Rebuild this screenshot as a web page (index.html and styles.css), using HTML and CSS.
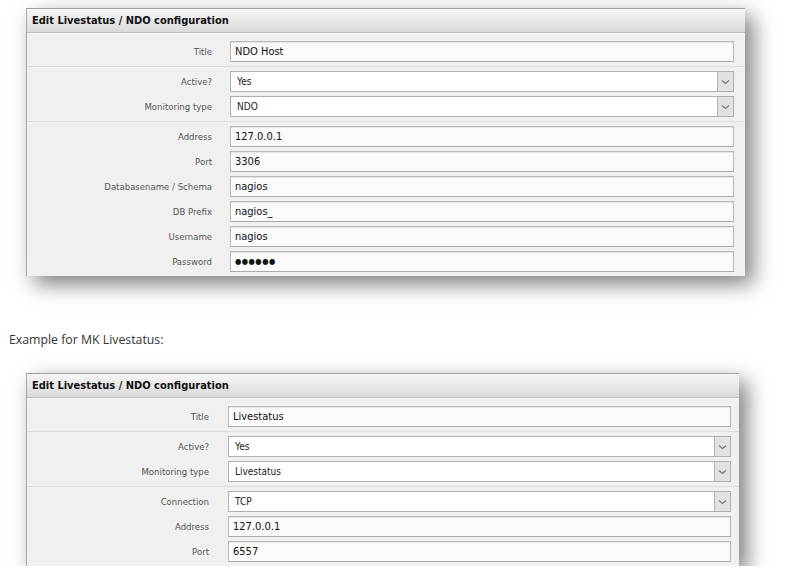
FILE: index.html
```html
<!DOCTYPE html>
<html>
<head>
<meta charset="utf-8">
<link rel="stylesheet" href="styles.css">
</head>
<body>
<div class="panel panel-a">
  <div class="panel-head">Edit Livestatus / NDO configuration</div>
  <div class="panel-body">
    <div class="group">
      <div class="row"><div class="label">Title</div><div class="field"><div class="input">NDO Host</div></div></div>
    </div>
    <div class="group">
      <div class="row"><div class="label">Active?</div><div class="field"><div class="select"><span class="sel-text">Yes</span><span class="sel-btn"><svg width="9" height="6" viewBox="0 0 9 6"><path d="M1 1.5 L4.5 4.5 L8 1.5" fill="none" stroke="#777" stroke-width="1.2"/></svg></span></div></div></div>
      <div class="row"><div class="label">Monitoring type</div><div class="field"><div class="select"><span class="sel-text">NDO</span><span class="sel-btn"><svg width="9" height="6" viewBox="0 0 9 6"><path d="M1 1.5 L4.5 4.5 L8 1.5" fill="none" stroke="#777" stroke-width="1.2"/></svg></span></div></div></div>
    </div>
    <div class="group last">
      <div class="row"><div class="label">Address</div><div class="field"><div class="input">127.0.0.1</div></div></div>
      <div class="row"><div class="label">Port</div><div class="field"><div class="input">3306</div></div></div>
      <div class="row"><div class="label">Databasename / Schema</div><div class="field"><div class="input">nagios</div></div></div>
      <div class="row"><div class="label">DB Prefix</div><div class="field"><div class="input">nagios_</div></div></div>
      <div class="row"><div class="label">Username</div><div class="field"><div class="input">nagios</div></div></div>
      <div class="row"><div class="label">Password</div><div class="field"><div class="input pw">●●●●●●</div></div></div>
    </div>
  </div>
</div>

<p class="example">Example for MK Livestatus:</p>

<div class="panel panel-b">
  <div class="panel-head">Edit Livestatus / NDO configuration</div>
  <div class="panel-body">
    <div class="group">
      <div class="row"><div class="label">Title</div><div class="field"><div class="input">Livestatus</div></div></div>
    </div>
    <div class="group">
      <div class="row"><div class="label">Active?</div><div class="field"><div class="select"><span class="sel-text">Yes</span><span class="sel-btn"><svg width="9" height="6" viewBox="0 0 9 6"><path d="M1 1.5 L4.5 4.5 L8 1.5" fill="none" stroke="#777" stroke-width="1.2"/></svg></span></div></div></div>
      <div class="row"><div class="label">Monitoring type</div><div class="field"><div class="select"><span class="sel-text">Livestatus</span><span class="sel-btn"><svg width="9" height="6" viewBox="0 0 9 6"><path d="M1 1.5 L4.5 4.5 L8 1.5" fill="none" stroke="#777" stroke-width="1.2"/></svg></span></div></div></div>
    </div>
    <div class="group last">
      <div class="row"><div class="label">Connection</div><div class="field"><div class="select"><span class="sel-text">TCP</span><span class="sel-btn"><svg width="9" height="6" viewBox="0 0 9 6"><path d="M1 1.5 L4.5 4.5 L8 1.5" fill="none" stroke="#777" stroke-width="1.2"/></svg></span></div></div></div>
      <div class="row"><div class="label">Address</div><div class="field"><div class="input">127.0.0.1</div></div></div>
      <div class="row"><div class="label">Port</div><div class="field"><div class="input">6557</div></div></div>
    </div>
  </div>
</div>
</body>
</html>
```

FILE: styles.css
```css
html, body {
  margin: 0;
  padding: 0;
  background: #ffffff;
}
body {
  padding-top: 8px;
  font-family: "DejaVu Sans Condensed", "DejaVu Sans", sans-serif;
}
.panel {
  margin-left: 26px;
  border-left: 1px solid #a8a8a8;
  background: #f0f0f0;
  box-shadow: 8px 8px 20px rgba(0, 0, 0, 0.5);
}
.panel-a { width: 718px; }
.panel-b { width: 712px; }
.panel-head {
  height: 23px;
  line-height: 23px;
  border-top: 1px solid #a0a0a0;
  border-bottom: 1px solid #bdbdbd;
  background: linear-gradient(#f6f6f6, #dadada);
  padding-left: 5px;
  font-size: 11px;
  font-weight: bold;
  color: #111;
}
.panel-body {
  padding-top: 3px;
  border-top: 1px solid #fafafa;
}
.group {
  padding: 2px 0;
  border-bottom: 1px solid #dcdcdc;
}
.group.last {
  border-bottom: none;
  padding-bottom: 2px;
}
.row {
  display: grid;
  grid-template-columns: 185px 1fr;
  height: 25px;
  align-items: center;
}
.panel-b .row { grid-template-columns: 182px 1fr; }
.label {
  text-align: right;
  font-size: 9.5px;
  color: #555;
}
.field {
  padding-left: 18px;
  padding-right: 11px;
}
.panel-b .field {
  padding-left: 19px;
  padding-right: 8px;
}
.input {
  box-sizing: border-box;
  height: 21px;
  line-height: 19px;
  border: 1px solid #b9b9b9;
  border-bottom-color: #aaaaaa;
  box-shadow: inset 0 1px 0 #e6e6e6;
  background: #fafafa;
  padding-left: 4px;
  font-size: 11px;
  color: #111;
}
.input.pw {
  font-size: 8px;
  letter-spacing: 0.5px;
}
.select {
  box-sizing: border-box;
  height: 21px;
  display: flex;
  border: 1px solid #b0b0b0;
  background: #ffffff;
}
.sel-text {
  flex: 1;
  line-height: 19px;
  padding-left: 6px;
  font-size: 10px;
  color: #222;
}
.sel-btn {
  width: 15px;
  border-left: 1px solid #b0b0b0;
  background: #e2e2e2;
  display: flex;
  align-items: center;
  justify-content: center;
}
.example {
  margin: 55px 0 0 9px;
  height: 18px;
  font-family: "Open Sans", sans-serif;
  font-size: 12.3px;
  color: #333;
}
.panel-b { margin-top: 24px; }
```
